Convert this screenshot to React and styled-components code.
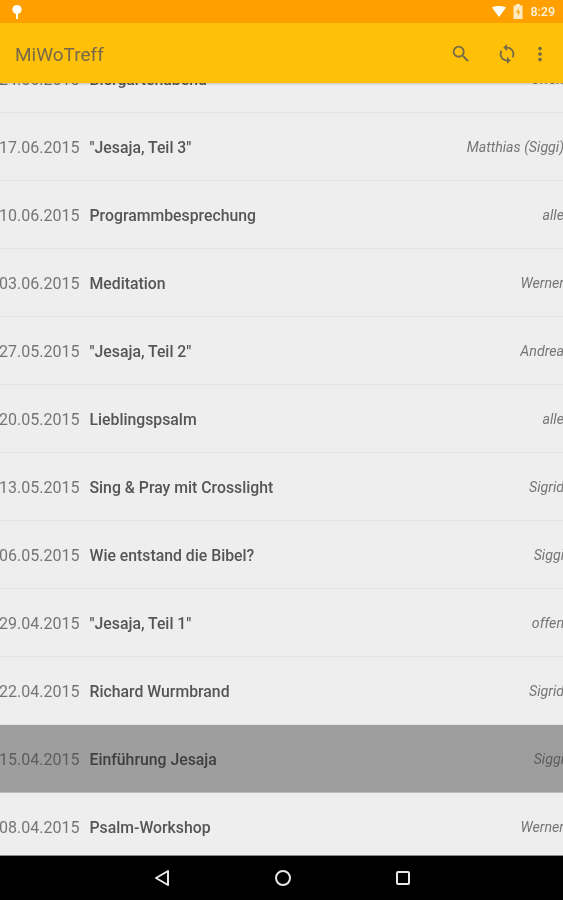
import React from "react";
import styled, { createGlobalStyle } from "styled-components";
import { MdSearch, MdSync, MdMoreVert } from "react-icons/md";

const GlobalStyle = createGlobalStyle`
  html, body {
    margin: 0;
    padding: 0;
    background: #000;
    font-family: Roboto, "Liberation Sans", sans-serif;
  }
`;

const Screen = styled.div`
  width: 563px;
  height: 900px;
  display: flex;
  flex-direction: column;
  overflow: hidden;
  filter: blur(0.4px);
`;

const StatusBar = styled.div`
  height: 23px;
  flex: none;
  background: #ffa000;
  display: flex;
  align-items: center;
  justify-content: space-between;
  padding: 0 8px 0 11px;
  color: #fff;
`;

const StatusRight = styled.div`
  display: flex;
  align-items: center;
  gap: 7px;
`;

const Clock = styled.span`
  font-size: 12.5px;
  font-weight: 500;
  color: #fff3dc;
`;

const AppBar = styled.header`
  height: 60px;
  box-sizing: border-box;
  padding: 2px 12px 0 15px;
  flex: none;
  background: #ffc107;
  display: flex;
  align-items: center;
  box-shadow: 0 1px 2px rgba(0, 0, 0, 0.18);
  position: relative;
  z-index: 1;
`;

const Title = styled.h1`
  margin: 0;
  flex: 1;
  font-size: 19px;
  font-weight: 400;
  color: #77694a;
`;

const Actions = styled.div`
  display: flex;
  align-items: center;
`;

const ActionIcon = styled.span`
  display: flex;
  margin-left: ${(p) => p.$gap}px;
  color: #756a48;
`;

const ListArea = styled.main`
  flex: 1;
  min-height: 0;
  overflow: hidden;
  background: #eeeeee;
`;

/* list is scrolled, so the first row slides under the app bar */
const List = styled.ul`
  list-style: none;
  margin: -38px -1px 0 -1px;
  padding: 0;
`;

const Row = styled.li`
  height: 66px;
  padding-top: 1px;
  display: flex;
  align-items: center;
  border-bottom: 1px solid ${(p) => (p.$selected ? "#bdbdbd" : "#e4e4e4")};
  background: ${(p) => (p.$selected ? "#9e9e9e" : "#eeeeee")};
`;

const DateCell = styled.span`
  width: 90.5px;
  flex: none;
  font-size: 16px;
  color: ${(p) => (p.$selected ? "#5c5c5c" : "#757575")};
`;

const Topic = styled.span`
  flex: 1;
  font-size: 15.8px;
  font-weight: 500;
  color: ${(p) => (p.$selected ? "#3f3f3f" : "#555555")};
`;

const Host = styled.span`
  font-size: 14.2px;
  font-style: italic;
  color: ${(p) => (p.$selected ? "#5c5c5c" : "#757575")};
`;

const NavBar = styled.nav`
  height: 45px;
  flex: none;
  background: #000;
  border-top: 1px solid #8a8a8a;
  box-sizing: border-box;
  display: flex;
  align-items: center;
  justify-content: center;
  gap: 103px;
  color: #e8e8e8;
`;

const rows = [
  { date: "24.06.2015", topic: "Biergartenabend", host: "offen" },
  { date: "17.06.2015", topic: '"Jesaja, Teil 3"', host: "Matthias (Siggi)" },
  { date: "10.06.2015", topic: "Programmbesprechung", host: "alle" },
  { date: "03.06.2015", topic: "Meditation", host: "Werner" },
  { date: "27.05.2015", topic: '"Jesaja, Teil 2"', host: "Andrea" },
  { date: "20.05.2015", topic: "Lieblingspsalm", host: "alle" },
  { date: "13.05.2015", topic: "Sing & Pray mit Crosslight", host: "Sigrid" },
  { date: "06.05.2015", topic: "Wie entstand die Bibel?", host: "Siggi" },
  { date: "29.04.2015", topic: '"Jesaja, Teil 1"', host: "offen" },
  { date: "22.04.2015", topic: "Richard Wurmbrand", host: "Sigrid" },
  { date: "15.04.2015", topic: "Einführung Jesaja", host: "Siggi", selected: true },
  { date: "08.04.2015", topic: "Psalm-Workshop", host: "Werner" },
];

function PinIcon() {
  return (
    <svg width="12" height="16" viewBox="0 0 12 16">
      <circle cx="6" cy="5.5" r="4.6" fill="#fff" />
      <rect x="5" y="9" width="2" height="6" fill="#fff" />
    </svg>
  );
}

function WifiIcon() {
  return (
    <svg width="14" height="11" viewBox="0 0 14 11">
      <path d="M0 1.5C4 -0.5 10 -0.5 14 1.5L7 11Z" fill="#fff" />
    </svg>
  );
}

function BatteryIcon() {
  return (
    <svg width="10" height="15" viewBox="0 0 10 15">
      <path d="M3 0h4v1.5h2.5V15H.5V1.5H3Z" fill="#ffe9c2" />
      <path d="M5.5 4 3 8.5h2V12l2.2-4.5h-1.8Z" fill="#ffa000" />
    </svg>
  );
}

export default function App() {
  return (
    <Screen>
      <GlobalStyle />
      <StatusBar>
        <PinIcon />
        <StatusRight>
          <WifiIcon />
          <BatteryIcon />
          <Clock>8:29</Clock>
        </StatusRight>
      </StatusBar>
      <AppBar>
        <Title>MiWoTreff</Title>
        <Actions>
          <ActionIcon $gap={0}><MdSearch size={22} /></ActionIcon>
          <ActionIcon $gap={24}><MdSync size={22} /></ActionIcon>
          <ActionIcon $gap={11}><MdMoreVert size={22} /></ActionIcon>
        </Actions>
      </AppBar>
      <ListArea>
        <List>
          {rows.map((row) => (
            <Row key={row.date} $selected={row.selected}>
              <DateCell $selected={row.selected}>{row.date}</DateCell>
              <Topic $selected={row.selected}>{row.topic}</Topic>
              <Host $selected={row.selected}>{row.host}</Host>
            </Row>
          ))}
        </List>
      </ListArea>
      <NavBar>
        <svg width="18" height="18" viewBox="0 0 18 18" fill="none" stroke="currentColor" strokeWidth="2">
          <path d="M15 2 3 9l12 7Z" strokeLinejoin="round" />
        </svg>
        <svg width="18" height="18" viewBox="0 0 18 18" fill="none" stroke="currentColor" strokeWidth="2">
          <circle cx="9" cy="9" r="7" />
        </svg>
        <svg width="16" height="16" viewBox="0 0 16 16" fill="none" stroke="currentColor" strokeWidth="2">
          <rect x="2" y="2" width="12" height="12" rx="1" />
        </svg>
      </NavBar>
    </Screen>
  );
}
